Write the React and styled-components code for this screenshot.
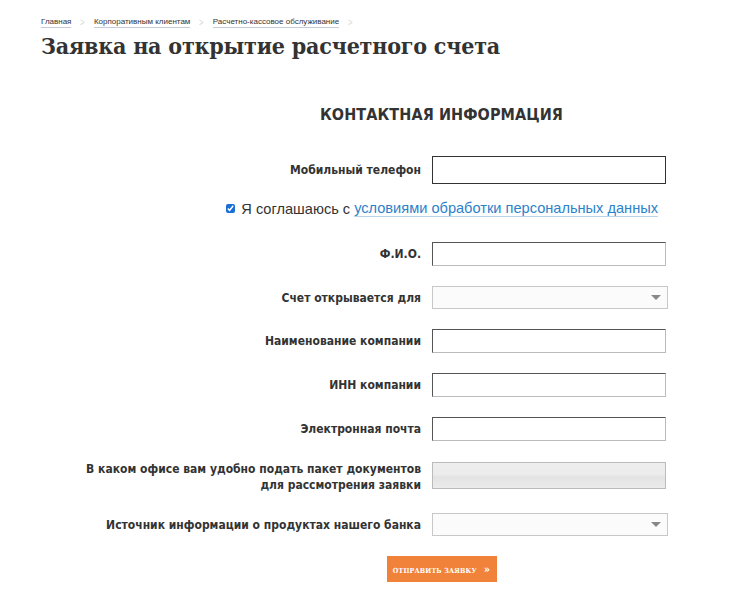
import styled, { createGlobalStyle } from "styled-components";

const GlobalStyle = createGlobalStyle`
  body {
    margin: 0;
    background: #fff;
    color: #333;
    font-family: "Liberation Sans", Arial, sans-serif;
  }
`;

const Page = styled.div`
  padding: 16px 0 0 41px;
`;

const Crumbs = styled.nav`
  display: flex;
  align-items: center;
  gap: 8px;
  font-family: "Liberation Sans", Arial, sans-serif;
  font-size: 8px;
  color: #333;
`;
const Crumb = styled.a`
  color: #333;
  text-decoration: none;
  border-bottom: 1px solid #c5cbd8;
  padding-bottom: 1px;
`;
const Sep = styled.span`
  color: #d8d8d8;
  font-size: 11px;
  transform: scaleX(0.7);
`;

const Title = styled.h1`
  margin: 4px 0 0;
  font-family: "DejaVu Serif Condensed", "DejaVu Serif", serif;
  font-weight: 700;
  font-size: 23px;
  letter-spacing: -0.2px;
  color: #333;
`;

const Heading = styled.h2`
  margin: 46px 0 0;
  padding-left: 88px;
  text-align: center;
  font-family: "DejaVu Sans Condensed", "DejaVu Sans", sans-serif;
  font-weight: 700;
  font-size: 16px;
  letter-spacing: 0.1px;
  color: #333;
`;

const Form = styled.form`
  display: grid;
  grid-template-columns: 380px 234px;
  column-gap: 11px;
  row-gap: 20px;
  align-items: center;
  margin-top: 32px;
`;

const Label = styled.label`
  text-align: right;
  font-family: "DejaVu Sans Condensed", "DejaVu Sans", sans-serif;
  font-weight: 700;
  font-size: 12px;
  line-height: 16px;
  color: #333;
`;

const Input = styled.input`
  box-sizing: border-box;
  width: 234px;
  height: ${(p) => p.$h || 24}px;
  margin: 0;
  border: 1px solid #999;
  border-top-color: ${(p) => (p.$dark ? "#333" : "#555")};
  border-left-color: ${(p) => (p.$dark ? "#333" : "#555")};
  border-right-color: ${(p) => (p.$dark ? "#333" : "#bbb")};
  border-bottom-color: ${(p) => (p.$dark ? "#333" : "#bbb")};
  background: #fff;
`;

const Select = styled.div`
  box-sizing: border-box;
  width: 236px;
  height: 23px;
  border: 1px solid #c8c8c8;
  background: #fbfbfb;
  display: flex;
  align-items: center;
  justify-content: flex-end;
  padding-right: 6px;
`;
const Arrow = styled.span`
  width: 0;
  height: 0;
  border-left: 5px solid transparent;
  border-right: 5px solid transparent;
  border-top: 5px solid #888;
`;

const OfficeBox = styled.div`
  box-sizing: border-box;
  width: 234px;
  height: 27px;
  margin-top: -3px;
  border: 1px solid #bbb;
  background: linear-gradient(#eeeeee 0%, #ececec 45%, #e3e3e3 55%, #ebebeb 100%);
`;

const Agree = styled.div`
  grid-column: 1 / span 2;
  display: flex;
  align-items: center;
  justify-content: flex-end;
  gap: 4px;
  padding-right: 8px;
  margin: -4px 0 5px;
  font-family: "Liberation Sans", Arial, sans-serif;
  font-size: 14.6px;
  color: #333;
`;
const Check = styled.input`
  margin: 0 2px 0 0;
  width: 9px;
  height: 9px;
  accent-color: #1a6fd6;
`;
const Link = styled.a`
  color: #2c82c9;
  text-decoration: none;
  border-bottom: 1px solid #b9d3ea;
`;

const Actions = styled.div`
  padding-left: 88px;
  display: flex;
  justify-content: center;
  margin-top: 20px;
`;
const Submit = styled.button`
  width: 110px;
  height: 26px;
  padding: 0;
  border: none;
  background: #f0823a;
  color: #fff;
  white-space: nowrap;
  font-family: "DejaVu Serif Condensed", "DejaVu Serif", serif;
  font-weight: 700;
  font-size: 7px;
  letter-spacing: 0.2px;
  cursor: pointer;
  span {
    margin-left: 7px;
    font-size: 11px;
  }
`;

const App = () => {
  return (
    <Page>
      <GlobalStyle />
      <Crumbs>
        <Crumb href="#">Главная</Crumb>
        <Sep>&gt;</Sep>
        <Crumb href="#">Корпоративным клиентам</Crumb>
        <Sep>&gt;</Sep>
        <Crumb href="#">Расчетно-кассовое обслуживание</Crumb>
        <Sep>&gt;</Sep>
      </Crumbs>
      <Title>Заявка на открытие расчетного счета</Title>
      <Heading>КОНТАКТНАЯ ИНФОРМАЦИЯ</Heading>
      <Form>
        <Label>Мобильный телефон</Label>
        <Input $dark $h={28} />
        <Agree>
          <Check type="checkbox" defaultChecked />
          Я соглашаюсь с <Link href="#">условиями обработки персональных данных</Link>
        </Agree>
        <Label>Ф.И.О.</Label>
        <Input />
        <Label>Счет открывается для</Label>
        <Select>
          <Arrow />
        </Select>
        <Label>Наименование компании</Label>
        <Input />
        <Label>ИНН компании</Label>
        <Input />
        <Label>Электронная почта</Label>
        <Input />
        <Label>
          В каком офисе вам удобно подать пакет документов
          <br />
          для рассмотрения заявки
        </Label>
        <OfficeBox />
        <Label>Источник информации о продуктах нашего банка</Label>
        <Select>
          <Arrow />
        </Select>
      </Form>
      <Actions>
        <Submit type="button">
          ОТПРАВИТЬ ЗАЯВКУ<span>»</span>
        </Submit>
      </Actions>
    </Page>
  );
};

export default App;
